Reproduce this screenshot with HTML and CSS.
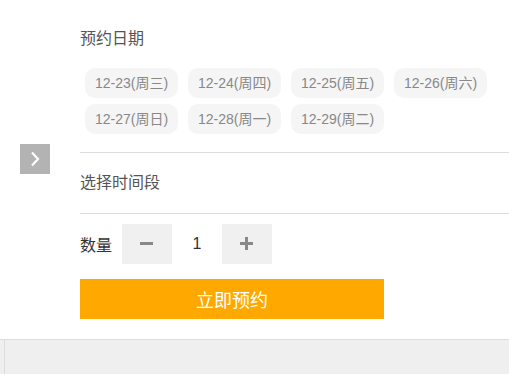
FILE: index.html
```html
<!DOCTYPE html>
<html lang="zh-CN">
<head>
<meta charset="UTF-8">
<meta name="viewport" content="width=device-width, initial-scale=1.0">
<title>预约</title>
<link rel="stylesheet" href="styles.css">
</head>
<body>
<div class="booking">
  <!-- side toggle -->
  <button class="side-toggle" aria-label="展开">
    <svg width="10" height="16" viewBox="0 0 10 16"><path d="M2 1.5 L8 8 L2 14.5" fill="none" stroke="#fff" stroke-width="2.2"/></svg>
  </button>

  <div class="section-title">预约日期</div>
  <div class="date-list">
    <span class="date-chip">12-23(周三)</span>
    <span class="date-chip">12-24(周四)</span>
    <span class="date-chip">12-25(周五)</span>
    <span class="date-chip">12-26(周六)</span>
    <span class="date-chip">12-27(周日)</span>
    <span class="date-chip">12-28(周一)</span>
    <span class="date-chip">12-29(周二)</span>
  </div>

  <div class="time-section">选择时间段</div>

  <div class="qty-row">
    <span class="qty-label">数量</span>
    <button class="qty-btn minus" aria-label="减少"></button>
    <span class="qty-value">1</span>
    <button class="qty-btn plus" aria-label="增加"></button>
  </div>

  <button class="submit-btn">立即预约</button>
</div>

<div class="footer">
  <div class="footer-inner"></div>
</div>
</body>
</html>
```

FILE: styles.css
```css
body {
  margin: 0;
  font-family: "Liberation Sans", "Noto Sans CJK SC", sans-serif;
  background: #fff;
  color: #333;
}

.booking {
  position: relative;
  height: 339px;
  box-sizing: border-box;
  padding: 24px 0 0 80px;
}

.side-toggle {
  position: absolute;
  left: 20px;
  top: 144px;
  width: 30px;
  height: 30px;
  border: 0;
  padding: 0;
  background: #b3b3b3;
  display: flex;
  justify-content: center;
  align-items: center;
}

.section-title {
  font-size: 16px;
  line-height: 30px;
  color: #555;
}

.date-list {
  display: flex;
  flex-wrap: wrap;
  margin-top: 11px;
  padding-bottom: 15px;
  border-bottom: 1px solid #ddd;
}

.date-chip {
  height: 30px;
  line-height: 30px;
  width: 93px;
  margin: 3px 5px;
  text-align: center;
  font-size: 14px;
  color: #888;
  background: #f5f5f5;
  border-radius: 10px;
}

.time-section {
  height: 60px;
  line-height: 60px;
  font-size: 16px;
  color: #555;
  border-bottom: 1px solid #ddd;
}

.qty-row {
  display: flex;
  align-items: center;
  margin-top: 10px;
  height: 40px;
}

.qty-label {
  font-size: 16px;
  color: #333;
  width: 42px;
}

.qty-btn {
  position: relative;
  width: 50px;
  height: 40px;
  border: 0;
  padding: 0;
  background: #f0f0f0;
}

.qty-btn::before,
.qty-btn.plus::after {
  content: "";
  position: absolute;
  left: 18px;
  top: 18px;
  width: 13px;
  height: 3px;
  background: #888;
}

.qty-btn.plus::after {
  left: 23px;
  top: 13px;
  width: 3px;
  height: 13px;
}

.qty-value {
  width: 50px;
  text-align: center;
  font-size: 16px;
  color: #333;
}

.submit-btn {
  display: block;
  margin-top: 15px;
  width: 304px;
  height: 40px;
  border: 0;
  padding: 0;
  background: #ffa800;
  color: #fff;
  font-family: inherit;
  font-size: 18px;
}

.footer {
  height: 35px;
  border-top: 1px solid #ddd;
  background: #efefef;
}

.footer-inner {
  margin-left: 4px;
  height: 100%;
  border-left: 1px solid #ddd;
}
```
